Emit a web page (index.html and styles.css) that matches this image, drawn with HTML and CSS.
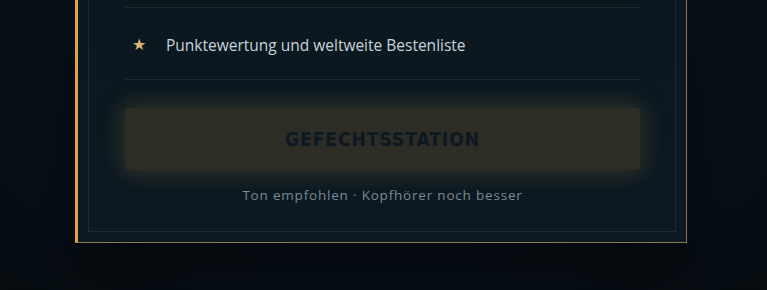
FILE: index.html
```html
<!DOCTYPE html>
<html lang="de">
<head>
  <meta charset="UTF-8" />
  <meta name="viewport" content="width=device-width, initial-scale=1" />
  <title>Gefechtsstation</title>
  <link rel="stylesheet" href="styles.css">
</head>
<body>
  <div class="stage">
    <div class="card">
      <div class="frame">
        <!-- Feature list (upper part scrolled out of view) -->
        <ul class="features">
          <li><span class="star">★</span>Punktewertung und weltweite Bestenliste</li>
        </ul>

        <button class="start-btn" type="button">Gefechtsstation</button>

        <p class="hint">Ton empfohlen · Kopfhörer noch besser</p>
      </div>
    </div>
  </div>
</body>
</html>
```

FILE: styles.css
```css
/* Basic Reset */
* { margin: 0; padding: 0; box-sizing: border-box; }
html, body { width: 100%; height: 100%; }

body {
  background:
    radial-gradient(ellipse at 50% 30%, #0c1a21 0%, #08121a 60%, #060c10 100%);
  font-family: 'Open Sans', 'Noto Sans', sans-serif;
  overflow: hidden;
}

/* Full viewport, card runs off the top edge */
.stage {
  height: 100vh;
  display: flex;
  flex-direction: column;
  padding: 0 80px 47px 75px;
}

.card {
  flex: 1;
  display: flex;
  flex-direction: column;
  background: linear-gradient(180deg, #0b1820 0%, #0c1922 100%);
  border-left: 3px solid #e3a243;
  border-right: 1px solid #8c7a4c;
  border-bottom: 1px solid #8c7a4c;
  padding: 0 10px 10px 10px;
  box-shadow: 0 30px 60px rgba(0, 0, 0, 0.55);
}

.frame {
  flex: 1;
  border: 1px solid #1d2c33;
  border-top: none;
  padding: 0 35px 27px 36px;
  display: flex;
  flex-direction: column;
  justify-content: flex-end;
}

/* Feature list */
.features {
  list-style: none;
}
.features li {
  display: flex;
  align-items: center;
  height: 73px;
  border-top: 1px solid #1d2a30;
  border-bottom: 1px solid #1d2a30;
  color: #c9d3da;
  font-size: 15.5px;
  padding-top: 2px;
}
.star {
  width: 41px;
  padding-left: 7px;
  color: #d6b574;
  font-size: 16px;
  font-family: 'DejaVu Sans', sans-serif;
}

/* Main button */
.start-btn {
  margin-top: 28px;
  height: 62px;
  border: none;
  border-radius: 4px;
  background: #2d2c25;
  box-shadow: 0 0 22px 4px rgba(175, 150, 75, 0.22);
  color: #0c1923;
  font-family: 'DejaVu Sans', sans-serif;
  font-stretch: condensed;
  font-weight: 800;
  font-size: 19px;
  letter-spacing: 1px;
  text-transform: uppercase;
  cursor: pointer;
}

.hint {
  margin-top: 16px;
  text-align: center;
  color: #7b8a93;
  font-size: 13.5px;
  letter-spacing: 0.8px;
}
```
